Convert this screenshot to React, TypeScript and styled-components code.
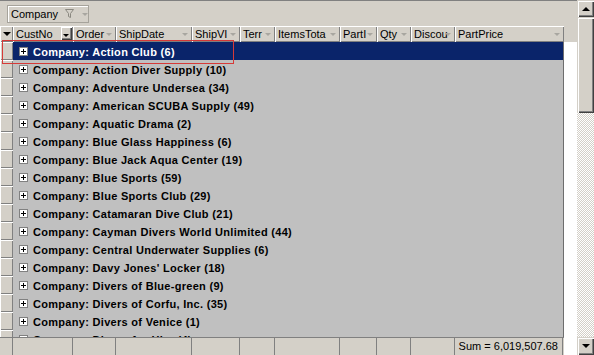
import React from 'react';
import styled, { createGlobalStyle } from 'styled-components';

const Global = createGlobalStyle`
  html, body { margin: 0; padding: 0; background: #d4d0c8; }
  body { font-family: "Liberation Sans", Arial, sans-serif; font-size: 11px; color: #000; }
  * { box-sizing: border-box; }
`;

const Window = styled.div`
  position: relative;
  width: 594px;
  height: 355px;
  display: flex;
  background: #d4d0c8;
  overflow: hidden;
`;

const GridArea = styled.div`
  width: 577px;
  display: flex;
  flex-direction: column;
  border-top: 1px solid #808080;
`;

const GroupPanel = styled.div`
  height: 25px;
  padding: 4px 0 0 7px;
  display: flex;
  align-items: flex-start;
`;

const GroupBox = styled.div`
  width: 82px;
  height: 18px;
  display: flex;
  align-items: center;
  padding-left: 3px;
  border: 1px solid #a6a39b;
  box-shadow: inset 1px 1px 0 #fff;
  background: #d4d0c8;
  font-size: 11px;
`;

const GroupLabel = styled.span`
  width: 54px;
`;

const Lower = styled.div`
  flex: 1;
  display: flex;
  min-height: 0;
`;

const Table = styled.div`
  width: 564px;
  display: flex;
  flex-direction: column;
`;

const HeaderRow = styled.div`
  height: 16px;
  display: flex;
`;

const HeaderCell = styled.div<{ $w: number }>`
  position: relative;
  width: ${(p) => p.$w}px;
  flex: none;
  height: 16px;
  line-height: 16px;
  padding: 0 13px 0 3px;
  white-space: nowrap;
  overflow: hidden;
  background: #d4d0c8;
  box-shadow: inset 1px 1px 0 #fff, inset -1px -1px 0 #808080;
`;

const Caret = styled.span<{ $dark?: boolean }>`
  position: absolute;
  right: ${(p) => (p.$dark ? 3 : 4)}px;
  top: 7px;
  width: 0;
  height: 0;
  border-left: 3px solid transparent;
  border-right: 3px solid transparent;
  border-top: 3px solid ${(p) => (p.$dark ? '#000' : '#a8a6a0')};
`;

const GroupCaret = styled(Caret)`
  position: static;
`;

const IndicatorHead = styled(HeaderCell)`
  padding: 0;
`;

const IndicatorCaret = styled.span`
  position: absolute;
  left: 3px;
  top: 6px;
  border-left: 4px solid transparent;
  border-right: 4px solid transparent;
  border-top: 4px solid #000;
`;

const DropButton = styled.span`
  position: absolute;
  right: 1px;
  top: 1px;
  width: 11px;
  height: 13px;
  background: #d4d0c8;
  box-shadow: inset 1px 1px 0 #fff, inset -1px -1px 0 #404040, inset -2px -2px 0 #808080;
`;

const Body = styled.div`
  flex: 1;
  min-height: 0;
  overflow: hidden;
  background: #c0c0c0;
  border-right: 1px solid #6e6e6e;
`;

const Row = styled.div`
  display: flex;
  height: 18px;
`;

const RowIndicator = styled.div`
  width: 13px;
  flex: none;
  background: #d4d0c8;
  box-shadow: inset 1px 1px 0 #fff, inset -1px -1px 0 #808080;
`;

const GroupCell = styled.div<{ $selected?: boolean }>`
  flex: 1;
  display: flex;
  align-items: center;
  padding: 1px 0 0 6px;
  background: ${(p) => (p.$selected ? '#0a246a' : 'transparent')};
  color: ${(p) => (p.$selected ? '#fff' : '#000')};
  font-weight: bold;
  letter-spacing: 0.3px;
  white-space: nowrap;
`;

const Expander = styled.span`
  position: relative;
  width: 9px;
  height: 9px;
  flex: none;
  margin-right: 5px;
  background: #fff;
  border: 1px solid #808080;
  &::before, &::after {
    content: '';
    position: absolute;
    background: #000;
  }
  &::before { left: 1px; top: 3px; width: 5px; height: 1px; }
  &::after { left: 3px; top: 1px; width: 1px; height: 5px; }
`;

const Footer = styled.div`
  height: 18px;
  display: flex;
  border-top: 1px solid #808080;
  background: #d4d0c8;
`;

const FooterCell = styled.div<{ $w: number }>`
  width: ${(p) => p.$w}px;
  flex: none;
  border-right: 1px solid #808080;
  line-height: 17px;
  text-align: right;
  padding-right: 4px;
  white-space: nowrap;
`;

const Margin = styled.div`
  width: 13px;
  display: flex;
  flex-direction: column;
`;

const MarginTop = styled.div`
  height: 16px;
`;

const MarginFill = styled.div`
  flex: 1;
  background: #fff;
`;

const ScrollBar = styled.div`
  width: 17px;
  display: flex;
  flex-direction: column;
`;

const ScrollButton = styled.div<{ $h: number }>`
  height: ${(p) => p.$h}px;
  flex: none;
  display: flex;
  align-items: center;
  justify-content: center;
  background: #d4d0c8;
  box-shadow: inset 1px 1px 0 #d4d0c8, inset 2px 2px 0 #fff, inset -1px -1px 0 #404040, inset -2px -2px 0 #808080;
`;

const Arrow = styled.span<{ $up?: boolean }>`
  width: 0;
  height: 0;
  border-left: 4px solid transparent;
  border-right: 4px solid transparent;
  ${(p) => (p.$up ? 'border-bottom: 4px solid #000;' : 'border-top: 4px solid #000;')}
`;

const Thumb = styled.div`
  height: 96px;
  flex: none;
  background: #d4d0c8;
  box-shadow: inset 1px 1px 0 #d4d0c8, inset 2px 2px 0 #fff, inset -1px -1px 0 #404040, inset -2px -2px 0 #808080;
`;

const Track = styled.div`
  flex: 1;
  background-color: #fff;
  background-image: conic-gradient(#d4d0c8 25%, #fff 0 50%, #d4d0c8 0 75%, #fff 0);
  background-size: 2px 2px;
`;

const Highlight = styled.div`
  position: absolute;
  left: 2px;
  top: 40px;
  width: 232px;
  height: 24px;
  border: 1px solid #d63a38;
  pointer-events: none;
`;

const columns: { label: string; w: number }[] = [
  { label: 'CustNo', w: 60 },
  { label: 'Order', w: 43 },
  { label: 'ShipDate', w: 76 },
  { label: 'ShipVI', w: 48 },
  { label: 'Terr', w: 35 },
  { label: 'ItemsTota', w: 65 },
  { label: 'PartI', w: 37 },
  { label: 'Qty', w: 34 },
  { label: 'Discou', w: 44 },
  { label: 'PartPrice', w: 109 },
];

const groups = [
  'Action Club (6)',
  'Action Diver Supply (10)',
  'Adventure Undersea (34)',
  'American SCUBA Supply (49)',
  'Aquatic Drama (2)',
  'Blue Glass Happiness (6)',
  'Blue Jack Aqua Center (19)',
  'Blue Sports (59)',
  'Blue Sports Club (29)',
  'Catamaran Dive Club (21)',
  'Cayman Divers World Unlimited (44)',
  'Central Underwater Supplies (6)',
  "Davy Jones' Locker (18)",
  'Divers of Blue-green (9)',
  'Divers of Corfu, Inc. (35)',
  'Divers of Venice (1)',
  'Divers-for-Hire (4)',
];

const Funnel = () => (
  <svg width="9" height="10" viewBox="0 0 9 10" style={{ marginRight: 8 }}>
    <path d="M0.5 0.5 H8.5 L5.5 4.5 V8.5 L3.5 7.5 V4.5 Z" fill="none" stroke="#8a8880" strokeWidth="1" />
  </svg>
);

export default function App() {
  return (
    <>
      <Global />
      <Window>
        <GridArea>
          <GroupPanel>
            <GroupBox>
              <GroupLabel>Company</GroupLabel>
              <Funnel />
              <GroupCaret />
            </GroupBox>
          </GroupPanel>
          <Lower>
            <Table>
              <HeaderRow>
                <IndicatorHead $w={13}>
                  <IndicatorCaret />
                </IndicatorHead>
                {columns.map((c, i) => (
                  <HeaderCell key={c.label} $w={c.w}>
                    {c.label}
                    {i === 0 ? (
                      <DropButton>
                        <Caret $dark />
                      </DropButton>
                    ) : (
                      <Caret />
                    )}
                  </HeaderCell>
                ))}
              </HeaderRow>
              <Body>
                {groups.map((g, i) => (
                  <Row key={g}>
                    <RowIndicator />
                    <GroupCell $selected={i === 0}>
                      <Expander />
                      Company: {g}
                    </GroupCell>
                  </Row>
                ))}
              </Body>
              <Footer>
                <FooterCell $w={13} />
                {columns.map((c, i) => (
                  <FooterCell key={c.label} $w={i === columns.length - 1 ? c.w - 1 : c.w}>
                    {i === columns.length - 1 ? 'Sum = 6,019,507.68' : ''}
                  </FooterCell>
                ))}
              </Footer>
            </Table>
            <Margin>
              <MarginTop />
              <MarginFill />
            </Margin>
          </Lower>
        </GridArea>
        <ScrollBar>
          <ScrollButton $h={17}>
            <Arrow $up />
          </ScrollButton>
          <Thumb />
          <Track />
          <ScrollButton $h={18}>
            <Arrow />
          </ScrollButton>
        </ScrollBar>
        <Highlight />
      </Window>
    </>
  );
}
